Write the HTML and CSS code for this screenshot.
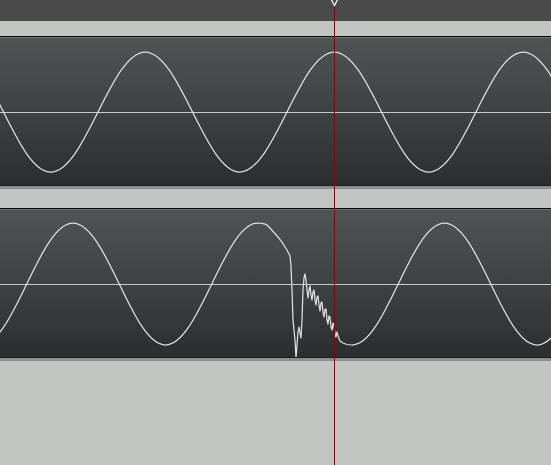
FILE: index.html
```html
<!DOCTYPE html>
<html lang="en">
<head>
    <meta charset="UTF-8">
    <title>Waveform Editor</title>
    <link rel="stylesheet" href="styles.css">
</head>
<body>
    <div class="editor">
        <div class="ruler"></div>
        <div class="spacer"></div>

        <div class="track">
            <div class="lane">
                <svg class="wave" viewBox="0 0 551 148" width="551" height="148">
                    <line class="axis" x1="0" y1="75.5" x2="551" y2="75.5"/>
                    <path class="signal" d="M -43.75 15 C -26.65 15, -11.91 44.26, 3.5 75
                        S 33.65 135 50.75 135 S 82.59 105.74 98 75 S 128.15 15 145.25 15
                        S 177.09 44.26 192.5 75 S 222.65 135 239.75 135 S 271.59 105.74 287 75
                        S 317.15 15 334.25 15 S 366.09 44.26 381.5 75 S 411.65 135 428.75 135
                        S 460.59 105.74 476 75 S 506.15 15 523.25 15 S 555.09 44.26 570.5 75"/>
                </svg>
            </div>
            <div class="foot"></div>
        </div>

        <div class="spacer small"></div>

        <div class="track">
            <div class="lane">
                <svg class="wave" viewBox="0 0 551 148" width="551" height="148">
                    <line class="axis" x1="0" y1="75.5" x2="551" y2="75.5"/>
                    <path class="signal" d="M -19.5 136 C -2.76 136, 11.67 106.25, 26.75 75
                        S 56.26 14 73 14 S 104.17 43.75 119.25 75 S 148.76 136 165.5 136
                        S 196.67 106.25 211.75 75 S 241.26 14 258 14
                        L 262 14.3 266 15.3 270 19 274 23.5 278 28 282 33.2 285 38 287 41
                        290 47 291 57 292 81 293 111 295 131 296 149 297 136 298 123 299 118
                        300 124 301 129 302 111 303 81 304 69 305 65 306 71 307 81 308 89
                        309 81 310 77 311 86 312 91 313 83 314 81 315 91 316 96 317 88 318 87
                        319 96 320 102 321 94 322 93 323 103 324 108 325 100 326 100 327 111
                        328 115 329 107 330 108 331 118 332 121 333 114 334 117 335 125 336 128
                        337 123 338 127 340 132 343 134 347 135.5 352 136
                        C 368.74 136, 383.17 106.25, 398.25 75 S 427.76 14 444.5 14
                        S 475.67 43.75 490.75 75 S 520.26 136 537 136 S 568.17 106.25 583.25 75"/>
                </svg>
            </div>
            <div class="foot"></div>
        </div>

        <div class="playhead">
            <svg class="playhead-cap" viewBox="0 0 13 7" width="13" height="7">
                <polygon points="1,-5 6.5,5.5 12,-5" />
            </svg>
        </div>
    </div>
</body>
</html>
```

FILE: styles.css
```css
body {
    margin: 0;
    padding: 0;
    background: #c2c4c2;
    overflow: hidden;
}
.editor {
    position: relative;
    width: 551px;
    height: 465px;
    overflow: hidden;
}
.ruler {
    height: 21px;
    background: #4a4a4a;
}
.spacer {
    height: 15px;
}
.spacer.small {
    height: 19px;
}
.track {
    border-top: 1px solid #0c0c0c;
}
.lane {
    height: 148px;
    background: linear-gradient(#505455, #3f4243 50%, #2c2d2f);
    box-shadow: inset 0 1px 0 #6a6e6f;
}
.wave {
    display: block;
}
.axis {
    stroke: #c9cbcb;
    stroke-width: 1;
}
.signal {
    fill: none;
    stroke: #dfe0e0;
    stroke-width: 1.25;
    stroke-linejoin: round;
}
.foot {
    height: 3px;
    border-top: 1px solid #1b1c1d;
    background: #8c8e8d;
}
.playhead {
    position: absolute;
    left: 334px;
    top: 0;
    width: 1px;
    height: 100%;
    background: #760b12;
}
.playhead-cap {
    position: absolute;
    left: -6px;
    top: 0;
}
.playhead-cap polygon {
    fill: #4a4a4a;
    stroke: #ffffff;
    stroke-width: 1.2;
}
```
